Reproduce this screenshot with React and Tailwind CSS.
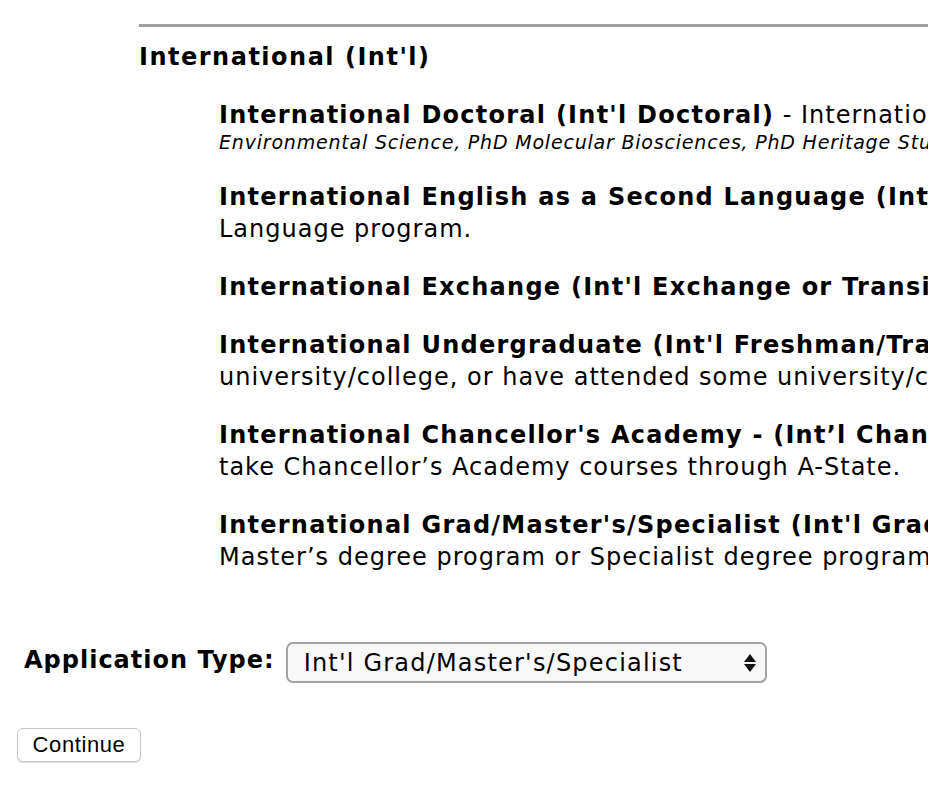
import React from "react";

const items = [
  {
    title: "International Doctoral (Int'l Doctoral)",
    rest: " - International students who wish to pursue a PhD in Environmental Sciences,",
    second: "Environmental Science, PhD Molecular Biosciences, PhD Heritage Studies, or other doctoral programs.",
    italic: true,
  },
  {
    title: "International English as a Second Language (Int'l ESL)",
    rest: " - Students who wish to enroll in the English as a Second",
    second: "Language program.",
  },
  {
    title: "International Exchange (Int'l Exchange or Transient)",
    rest: " - Students attending A-State for a semester or a year.",
  },
  {
    title: "International Undergraduate (Int'l Freshman/Transfer)",
    rest: " - Students who have never attended a",
    second: "university/college, or have attended some university/college after high school.",
  },
  {
    title: "International Chancellor's Academy - (Int\u2019l Chancellor's Academy)",
    rest: " - High school students who wish to",
    second: "take Chancellor\u2019s Academy courses through A-State.",
  },
  {
    title: "International Grad/Master's/Specialist (Int'l Grad)",
    rest: " - Students who wish to enroll in a",
    second: "Master\u2019s degree program or Specialist degree program.",
  },
];

const font = { fontFamily: '"DejaVu Sans", Verdana, sans-serif' };

export default function App() {
  return (
    <div
      className="w-[928px] h-[792px] overflow-hidden bg-white text-black"
      style={font}
    >
      <div className="pl-[139px] pt-[24px]">
        <div className="w-[900px] h-[3px] bg-[#a0a0a0]" />
        <h2 className="mt-[14px] text-[24px] leading-[32px] font-bold tracking-[1.5px] whitespace-nowrap">
          International (Int'l)
        </h2>

        <div className="pl-[80px] mt-[26px] flex flex-col gap-[26px]">
          {items.map((it) => (
            <div key={it.title} className="whitespace-nowrap text-[24px] leading-[32px] tracking-[1px]">
              <div>
                <span className="font-bold tracking-[1.25px]">{it.title}</span>
                <span>{it.rest}</span>
              </div>
              {it.second &&
                (it.italic ? (
                  <div className="italic text-[19px] leading-[22px] tracking-[0.8px] mb-[2px]">
                    {it.second}
                  </div>
                ) : (
                  <div>{it.second}</div>
                ))}
            </div>
          ))}
        </div>
      </div>

      <div className="flex items-center pl-[24px] mt-[69px]">
        <label className="text-[24px] leading-[32px] font-bold tracking-[1px] whitespace-nowrap -mt-[6px]">
          Application Type:
        </label>
        <div className="ml-[11px] w-[481px] h-[41px] rounded-[7px] border-2 border-[#a3a3a3] bg-[#f8f8f8] flex items-center justify-between pl-[16px] pr-[9px]">
          <span className="text-[24px] leading-[30px] tracking-[1.2px] whitespace-nowrap">
            Int'l Grad/Master's/Specialist
          </span>
          <svg width="12" height="18" viewBox="0 0 12 18">
            <path d="M6 0 L12 8 L0 8 Z" fill="#111" />
            <path d="M0 10 L12 10 L6 18 Z" fill="#111" />
          </svg>
        </div>
      </div>

      <div className="pl-[17px] mt-[45px]">
        <button
          type="button"
          className="w-[124px] h-[34px] rounded-[6px] border border-[#c8c8c8] bg-white shadow-[0_1px_1px_rgba(0,0,0,0.15)] text-[22px] leading-[26px] tracking-[0.6px]"
          style={{ fontFamily: '"Liberation Sans", Arial, sans-serif' }}
        >
          Continue
        </button>
      </div>
    </div>
  );
}
